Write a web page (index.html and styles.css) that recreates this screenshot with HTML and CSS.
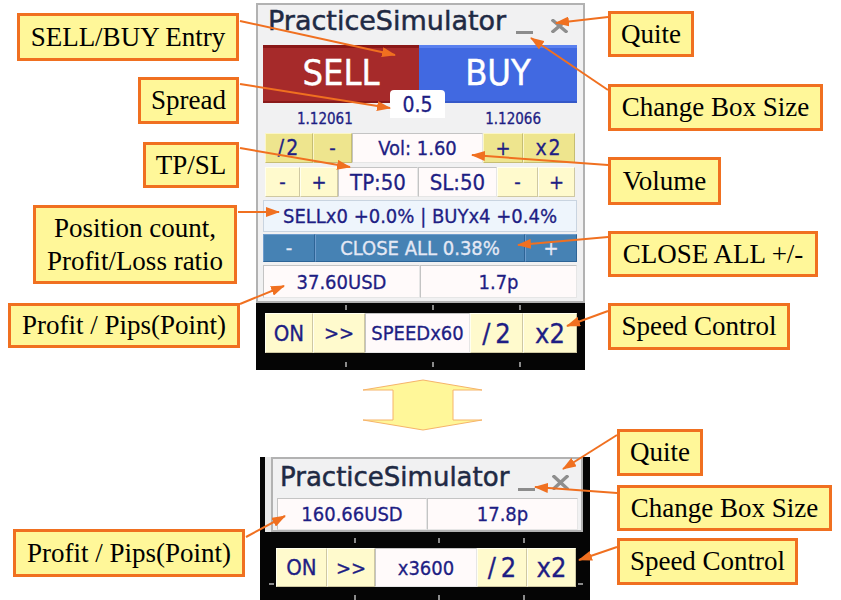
FILE: index.html
```html
<!DOCTYPE html>
<html>
<head>
<meta charset="utf-8">
<title>PracticeSimulator</title>
<link rel="stylesheet" href="styles.css">
</head>
<body>
<div class="canvas">

  <div class="callout c-entry">SELL/BUY Entry</div>
  <div class="callout c-spread">Spread</div>
  <div class="callout c-tpsl">TP/SL</div>
  <div class="callout c-pos">Position count,<br>Profit/Loss ratio</div>
  <div class="callout c-pips1">Profit / Pips(Point)</div>
  <div class="callout c-quite1">Quite</div>
  <div class="callout c-size1">Change Box Size</div>
  <div class="callout c-vol">Volume</div>
  <div class="callout c-close">CLOSE ALL +/-</div>
  <div class="callout c-speed1">Speed Control</div>
  <div class="callout c-quite2">Quite</div>
  <div class="callout c-size2">Change Box Size</div>
  <div class="callout c-speed2">Speed Control</div>
  <div class="callout c-pips2">Profit / Pips(Point)</div>

  <div class="win win-top">
    <div class="title">
      <span class="title-text">PracticeSimulator</span>
      <span class="min"></span>
      <svg class="xicon" width="17" height="14" viewBox="0 0 17 14"><path d="M2 1.5 L15 12.5 M15 1.5 L2 12.5" stroke="#8e8e8e" stroke-width="3.4" stroke-linecap="square"/></svg>
    </div>
    <div class="trade">
      <div class="sell">SELL</div>
      <div class="buy">BUY</div>
    </div>
    <div class="prices"><span>1.12061</span><span>1.12066</span></div>
    <div class="row vol-row">
      <div class="btn khaki wide">/2</div>
      <div class="btn khaki">-</div>
      <div class="cell">Vol: 1.60</div>
      <div class="btn khaki">+</div>
      <div class="btn khaki wide">x2</div>
    </div>
    <div class="row tp-row">
      <div class="btn lemon">-</div>
      <div class="btn lemon">+</div>
      <div class="cell tp">TP:50</div>
      <div class="cell tp">SL:50</div>
      <div class="btn lemon">-</div>
      <div class="btn lemon">+</div>
    </div>
    <div class="info">SELLx0 +0.0% | BUYx4 +0.4%</div>
    <div class="row close-row">
      <div class="sbtn">-</div>
      <div class="sbtn">CLOSE ALL 0.38%</div>
      <div class="sbtn">+</div>
    </div>
    <div class="row usd-row">
      <div class="cell">37.60USD</div>
      <div class="cell">1.7p</div>
    </div>
  </div>
  <div class="spread">0.5</div>

  <div class="speedbar">
    <span class="tick" style="left:89px;top:2px"></span>
    <span class="tick" style="left:176px;top:2px"></span>
    <span class="tick" style="left:263px;top:2px"></span>
    <span class="tick" style="left:89px;top:59px"></span>
    <span class="tick" style="left:176px;top:59px"></span>
    <span class="tick" style="left:263px;top:59px"></span>
    <div class="row speed-row">
      <div class="btn lemon on">ON</div>
      <div class="btn lemon">&gt;&gt;</div>
      <div class="cell">SPEEDx60</div>
      <div class="btn lemon big half">/2</div>
      <div class="btn lemon big">x2</div>
    </div>
  </div>

  <svg class="double-arrow" width="841" height="600" viewBox="0 0 841 600">
    <polygon points="423,380 482,390 453,390 453,420 482,420 423,430 363,420 393,420 393,390 363,390" fill="#fff799" stroke="#f6b46a" stroke-width="1"/>
  </svg>

  <div class="chart">
    <span class="tick" style="left:94px;top:81px"></span>
    <span class="tick" style="left:178px;top:81px"></span>
    <span class="tick" style="left:263px;top:81px"></span>
    <span class="tick" style="left:94px;top:138px"></span>
    <span class="tick" style="left:178px;top:138px"></span>
    <span class="tick" style="left:263px;top:138px"></span>
    <span class="htick" style="left:9px;top:126px"></span>
    <span class="htick" style="left:318px;top:126px"></span>
    <div class="win win-small">
      <div class="title small-title">
        <span class="title-text">PracticeSimulator</span>
        <span class="min"></span>
        <svg class="xicon" width="17" height="15" viewBox="0 0 17 15"><path d="M2 1.5 L15 13.5 M15 1.5 L2 13.5" stroke="#8e8e8e" stroke-width="3.4" stroke-linecap="square"/></svg>
      </div>
      <div class="row usd2-row">
        <div class="cell">160.66USD</div>
        <div class="cell">17.8p</div>
      </div>
    </div>
    <div class="row speed2-row">
      <div class="btn lemon on">ON</div>
      <div class="btn lemon">&gt;&gt;</div>
      <div class="cell">x3600</div>
      <div class="btn lemon big half">/2</div>
      <div class="btn lemon big">x2</div>
    </div>
  </div>

  <svg class="arrows" width="841" height="600" viewBox="0 0 841 600">
    <defs>
      <marker id="ah" markerUnits="userSpaceOnUse" markerWidth="14" markerHeight="10" refX="13" refY="5" orient="auto">
        <path d="M0 0 L14 5 L0 10 Z" fill="#f07020"/>
      </marker>
    </defs>
    <g stroke="#f07020" stroke-width="2" fill="none" marker-end="url(#ah)">
      <line x1="240" y1="21" x2="395" y2="55"/>
      <line x1="240" y1="84" x2="390" y2="108"/>
      <line x1="240" y1="148" x2="350" y2="167"/>
      <line x1="238" y1="212" x2="279" y2="212"/>
      <line x1="240" y1="304" x2="284" y2="286"/>
      <line x1="608" y1="17" x2="556" y2="23"/>
      <line x1="608" y1="90" x2="531" y2="38"/>
      <line x1="608" y1="165" x2="472" y2="155"/>
      <line x1="608" y1="237" x2="518" y2="245"/>
      <line x1="608" y1="311" x2="567" y2="326"/>
      <line x1="617" y1="435" x2="563" y2="469"/>
      <line x1="617" y1="493" x2="535" y2="487"/>
      <line x1="617" y1="547" x2="579" y2="560"/>
      <line x1="246" y1="537" x2="285" y2="516"/>
    </g>
  </svg>

</div>
</body>
</html>
```

FILE: styles.css
```css
html, body {
  margin: 0;
  padding: 0;
  background: #ffffff;
}

.canvas {
  position: relative;
  width: 841px;
  height: 600px;
  overflow: hidden;
  background: #ffffff;
  font-family: "DejaVu Sans Condensed", "DejaVu Sans", sans-serif;
}

/* ---------- callouts ---------- */
.callout {
  position: absolute;
  box-sizing: border-box;
  display: flex;
  align-items: center;
  justify-content: center;
  text-align: center;
  border: 3px solid #f07020;
  background: #fff799;
  color: #000;
  font-family: "Liberation Serif", "Times New Roman", serif;
  font-size: 27px;
  line-height: 33px;
  white-space: nowrap;
  z-index: 2;
}
.c-entry  { left: 17px;  top: 13px;  width: 222px; height: 48px; }
.c-spread { left: 138px; top: 77px;  width: 101px; height: 47px; }
.c-tpsl   { left: 143px; top: 142px; width: 96px;  height: 46px; }
.c-pos    { left: 33px;  top: 205px; width: 204px; height: 79px; }
.c-pips1  { left: 8px;   top: 303px; width: 232px; height: 45px; }
.c-quite1 { left: 608px; top: 11px;  width: 86px;  height: 46px; }
.c-size1  { left: 608px; top: 84px;  width: 215px; height: 47px; }
.c-vol    { left: 608px; top: 157px; width: 113px; height: 48px; }
.c-close  { left: 608px; top: 231px; width: 210px; height: 46px; }
.c-speed1 { left: 608px; top: 303px; width: 182px; height: 47px; }
.c-quite2 { left: 617px; top: 429px; width: 86px;  height: 47px; }
.c-size2  { left: 617px; top: 485px; width: 215px; height: 46px; }
.c-speed2 { left: 617px; top: 538px; width: 181px; height: 47px; }
.c-pips2  { left: 13px;  top: 529px; width: 232px; height: 48px; }

/* ---------- window ---------- */
.win {
  box-sizing: border-box;
  background: #f1f1f2;
  border: 2px solid #b2b2b2;
  color: #1e1e84;
}
.win-top {
  position: absolute;
  left: 256px;
  top: 3px;
  width: 329px;
  height: 300px;
  padding: 0 6px 0 5px;
  display: flex;
  flex-direction: column;
}

.title {
  display: flex;
  align-items: flex-start;
  height: 40px;
  box-sizing: border-box;
  padding: 2px 0 0 5px;
}
.title-text {
  font-family: "DejaVu Sans", sans-serif;
  font-size: 27px;
  line-height: 27px;
  color: #1f2a44;
  -webkit-text-stroke: 0.5px #1f2a44;
}
.min {
  width: 17px;
  height: 3px;
  background: #8c8c8c;
  margin: 24px 0 0 10px;
}
.xicon {
  margin: 12px 0 0 18px;
}

.trade {
  display: grid;
  grid-template-columns: 156px 158px;
  height: 58px;
}
.sell, .buy {
  display: flex;
  align-items: center;
  justify-content: center;
  color: #ffffff;
  font-size: 36px;
  padding-bottom: 4px;
  box-sizing: border-box;
  -webkit-text-stroke: 0.4px #ffffff;
}
.sell {
  background: #a62a2a;
  border-top: 3px solid #8a1818;
  border-bottom: 2px solid #8a1a1a;
}
.buy {
  background: #4169e1;
  border-top: 3px solid #5a80ef;
  border-bottom: 2px solid #3558c8;
}

.spread {
  position: absolute;
  left: 390px;
  top: 90px;
  width: 55px;
  height: 28px;
  background: #ffffff;
  border-radius: 4px 4px 0 0;
  color: #1e1e84;
  font-size: 21px;
  display: flex;
  align-items: center;
  justify-content: center;
  padding-top: 2px;
  box-sizing: border-box;
  z-index: 1;
  -webkit-text-stroke: 0.3px #1e1e84;
}

.prices {
  height: 27px;
  display: flex;
  justify-content: space-between;
  align-items: flex-end;
  padding: 0 36px 2px 34px;
  box-sizing: border-box;
  font-size: 15px;
  color: #1e1e84;
  -webkit-text-stroke: 0.3px #1e1e84;
}

.row {
  display: grid;
}
.vol-row {
  margin: 3px 2px 0;
  height: 30px;
  grid-template-columns: 48px 39px 131px 40px 52px;
}
.tp-row {
  margin: 4px 2px 0;
  height: 30px;
  grid-template-columns: 35px 38px 80px 79px 41px 37px;
}
.info {
  margin-top: 3px;
  height: 32px;
  box-sizing: border-box;
  background: #eef5fc;
  border: 1px solid #c9d4e0;
  display: flex;
  align-items: center;
  justify-content: center;
  font-size: 20px;
  color: #1e1e84;
  -webkit-text-stroke: 0.3px #1e1e84;
}
.close-row {
  margin-top: 2px;
  height: 28px;
  grid-template-columns: 52px 210px 52px;
}
.usd-row {
  margin-top: 3px;
  height: 33px;
  grid-template-columns: 157px 157px;
}

.btn, .cell, .sbtn {
  display: flex;
  align-items: center;
  justify-content: center;
  box-sizing: border-box;
  font-size: 20px;
  color: #1e1e84;
  white-space: nowrap;
  -webkit-text-stroke: 0.3px currentColor;
}
.btn {
  border: 1px solid;
}
.khaki {
  background: #eee58e;
  border-color: #fbf6c8 #c6bd72 #c6bd72 #fbf6c8;
}
.lemon {
  background: #fffacd;
  border-color: #ffffef #cfc8a2 #cfc8a2 #ffffef;
}
.cell {
  background: #fffafa;
  border: 1px solid;
  border-color: #c4c4c4 #e6e6e6 #e6e6e6 #c4c4c4;
}
.tp {
  font-size: 22px;
}
.wide {
  font-size: 21px;
  letter-spacing: 2px;
}
.on {
  font-size: 22px;
}
.sbtn {
  background: #4682b4;
  color: #e4e8f4;
  border: 1px solid;
  border-color: #6e9ccc #2e6496 #2e6496 #6e9ccc;
}
.big {
  font-size: 27px;
}
.half {
  letter-spacing: 5px;
  padding-left: 5px;
}

/* ---------- speed bar (chart area) ---------- */
.speedbar {
  position: absolute;
  left: 256px;
  top: 303px;
  width: 329px;
  height: 67px;
  box-sizing: border-box;
  background: #050505;
  padding: 10px 8px 0 9px;
}
.speed-row {
  height: 40px;
  grid-template-columns: 48px 52px 105px 53px 54px;
}
.tick {
  position: absolute;
  width: 2px;
  height: 5px;
  background: #8a8a8a;
}
.htick {
  position: absolute;
  width: 5px;
  height: 2px;
  background: #8a8a8a;
}

.double-arrow, .arrows {
  position: absolute;
  left: 0;
  top: 0;
  pointer-events: none;
}
.arrows { z-index: 3; }

/* ---------- bottom chart ---------- */
.chart {
  position: absolute;
  left: 260px;
  top: 457px;
  width: 330px;
  height: 143px;
  background: #050505;
}
.win-small {
  margin-left: 11px;
  width: 312px;
  height: 75px;
  box-shadow: -6px 0 0 #e9e9e9;
}
.small-title {
  height: 31px;
  padding: 5px 0 0 7px;
}
.small-title .title-text {
  font-size: 26px;
  line-height: 26px;
}
.small-title .min {
  margin: 24px 0 0 9px;
}
.small-title .xicon {
  margin: 11px 0 0 17px;
}
.usd2-row {
  margin: 8px 0 0 4px;
  width: 301px;
  height: 32px;
  grid-template-columns: 150px 151px;
}
.speed2-row {
  margin: 16px 0 0 16px;
  width: 300px;
  height: 39px;
  grid-template-columns: 51px 48px 102px 50px 49px;
}
```
